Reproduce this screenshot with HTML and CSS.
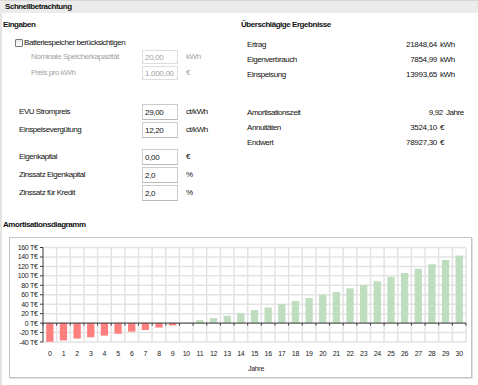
FILE: index.html
```html
<!DOCTYPE html>
<html lang="de">
<head>
    <meta charset="UTF-8">
    <meta name="viewport" content="width=device-width, initial-scale=1.0">
    <title>Schnellbetrachtung</title>
    <link rel="stylesheet" href="styles.css">
</head>
<body>
    <div class="titlebar">Schnellbetrachtung</div>

    <div class="content">
        <div class="top">
            <section class="inputs">
                <h2>Eingaben</h2>

                <div class="group group-battery">
                    <label class="check-row">
                        <input type="checkbox" class="check">
                        <span>Batteriespeicher berücksichtigen</span>
                    </label>
                    <div class="field sub disabled">
                        <span class="field-label">Nominale Speicherkapazität</span>
                        <input type="text" class="num-input" value="20,00" disabled>
                        <span class="unit">kWh</span>
                    </div>
                    <div class="field sub disabled">
                        <span class="field-label">Preis pro kWh</span>
                        <input type="text" class="num-input" value="1.000,00" disabled>
                        <span class="unit">€</span>
                    </div>
                </div>

                <div class="group group-price">
                    <div class="field">
                        <span class="field-label">EVU Strompreis</span>
                        <input type="text" class="num-input" value="29,00">
                        <span class="unit">ct/kWh</span>
                    </div>
                    <div class="field">
                        <span class="field-label">Einspeisevergütung</span>
                        <input type="text" class="num-input" value="12,20">
                        <span class="unit">ct/kWh</span>
                    </div>
                </div>

                <div class="group group-money">
                    <div class="field">
                        <span class="field-label">Eigenkapital</span>
                        <input type="text" class="num-input" value="0,00">
                        <span class="unit">€</span>
                    </div>
                    <div class="field">
                        <span class="field-label">Zinssatz Eigenkapital</span>
                        <input type="text" class="num-input" value="2,0">
                        <span class="unit">%</span>
                    </div>
                    <div class="field">
                        <span class="field-label">Zinssatz für Kredit</span>
                        <input type="text" class="num-input" value="2,0">
                        <span class="unit">%</span>
                    </div>
                </div>
            </section>

            <section class="results">
                <h2>Überschlägige Ergebnisse</h2>

                <div class="group group-energy">
                    <div class="result-row">
                        <span>Ertrag</span><span class="value">21848,64</span><span>kWh</span>
                    </div>
                    <div class="result-row">
                        <span>Eigenverbrauch</span><span class="value">7854,99</span><span>kWh</span>
                    </div>
                    <div class="result-row">
                        <span>Einspeisung</span><span class="value">13993,65</span><span>kWh</span>
                    </div>
                </div>

                <div class="group group-finance">
                    <div class="result-row wide">
                        <span>Amortisationszeit</span><span class="value">9,92</span><span>Jahre</span>
                    </div>
                    <div class="result-row">
                        <span>Annuitäten</span><span class="value">3524,10</span><span>€</span>
                    </div>
                    <div class="result-row">
                        <span>Endwert</span><span class="value">78927,30</span><span>€</span>
                    </div>
                </div>
            </section>
        </div>

        <section class="chart-section">
            <h2>Amortisationsdiagramm</h2>
            <div class="chart-frame">
                <svg id="chart" width="461" height="139" viewBox="10 238 461 139"></svg>
            </div>
        </section>
    </div>

    <script>
        const data = [-39.5, -36.6, -32.7, -30, -26.6, -22.5, -18, -14.5, -9.5, -5, 0.4,
            6.4, 10.6, 15.5, 21, 27.6, 33, 40, 46.6, 53, 60, 66, 73.6, 81, 88.5,
            97.7, 106, 115, 124.6, 133.8, 143];

        const NS = 'http://www.w3.org/2000/svg';
        const chart = document.getElementById('chart');
        const left = 43, right = 466, zero = 323.1, scale = 0.4725;
        const cw = (right - left) / data.length;
        const y = v => zero - v * scale;

        function add(tag, attrs, text) {
            const el = document.createElementNS(NS, tag);
            for (const k in attrs) el.setAttribute(k, attrs[k]);
            if (text !== undefined) el.textContent = text;
            chart.appendChild(el);
            return el;
        }

        // grid
        for (let v = -40; v <= 160; v += 20) {
            add('line', { x1: left, x2: right, y1: y(v), y2: y(v), class: 'grid' });
        }
        for (let k = 1; k <= data.length; k++) {
            const x = left + cw * k;
            add('line', { x1: x, x2: x, y1: y(160), y2: y(-40), class: 'grid' });
        }

        // bars
        data.forEach((v, i) => {
            const cx = left + cw * (i + 0.5);
            const top = v >= 0 ? y(v) : zero;
            add('rect', {
                x: cx - 3.65, y: top, width: 7.3, height: Math.abs(v) * scale,
                class: v >= 0 ? 'bar-pos' : 'bar-neg'
            });
            add('text', { x: cx, y: 356, class: 'tick-label', 'text-anchor': 'middle' }, i);
        });

        // axes
        add('line', { x1: left, x2: left, y1: y(160), y2: y(-40), class: 'axis' });
        add('line', { x1: left, x2: right, y1: zero, y2: zero, class: 'axis' });
        for (let k = 0; k <= data.length; k++) {
            const x = left + cw * k;
            add('line', { x1: x, x2: x, y1: zero, y2: zero + 2.5, class: 'axis' });
        }
        for (let v = -40; v <= 160; v += 20) {
            add('line', { x1: left - 3, x2: left, y1: y(v), y2: y(v), class: 'axis' });
            add('text', { x: 37.5, y: y(v) + 2.5, class: 'tick-label', 'text-anchor': 'end' }, v + ' T€');
        }

        add('text', { x: 256, y: 371, class: 'tick-label', 'text-anchor': 'middle' }, 'Jahre');
    </script>
</body>
</html>
```

FILE: styles.css
```css
* {
    margin: 0;
    padding: 0;
    box-sizing: border-box;
}

body {
    width: 478px;
    height: 385px;
    overflow: hidden;
    background: #ffffff;
    color: #111111;
    font-family: "Liberation Sans", Arial, sans-serif;
    font-size: 8px;
    letter-spacing: -0.45px;
    line-height: 12px;
    white-space: nowrap;
}

.titlebar {
    height: 13px;
    padding-left: 5px;
    background: #ececec;
    border-top: 1px solid #d8d8d8;
    font-weight: bold;
    line-height: 12px;
}

.content {
    height: 372px;
    border-left: 2px solid #e4e4e4;
}

h2 {
    font-size: 8px;
    font-weight: bold;
    line-height: 12px;
    margin-top: 6px;
}

.top {
    display: flex;
    height: 189px;
}

/* Eingaben */

.inputs {
    width: 236px;
}

.inputs h2 {
    padding-left: 1px;
}

.group-battery {
    margin-top: 6px;
}

.group-price {
    margin-top: 22px;
}

.group-money {
    margin-top: 9px;
}

.check-row {
    display: flex;
    align-items: center;
    height: 12px;
    padding-left: 13px;
}

.check {
    appearance: none;
    -webkit-appearance: none;
    width: 8px;
    height: 8px;
    margin-right: 1px;
    border: 1px solid #7a7a7a;
    border-radius: 1px;
    background: linear-gradient(#e8e8e8, #ffffff);
}

.field {
    display: grid;
    grid-template-columns: 132px 36px auto;
    column-gap: 8px;
    align-items: center;
    height: 18px;
}

.field-label {
    padding-left: 17px;
}

.field.sub {
    height: 16px;
}

.field.sub .field-label {
    padding-left: 29px;
}

.num-input {
    width: 36px;
    height: 16px;
    padding-left: 2px;
    border: 1px solid #cccccc;
    border-bottom-color: #b9b9b9;
    background: #ffffff;
    color: #111111;
    font: inherit;
    letter-spacing: -0.3px;
    outline: none;
}

.field.sub .num-input {
    height: 14px;
}

.field.disabled {
    color: #a3a3a3;
}

.field.disabled .num-input {
    color: #a3a3a3;
    border-color: #dddddd;
}

/* Ergebnisse */

.results {
    flex: 1;
    padding-left: 2px;
}

.results h2 {
    padding-left: 1px;
}

.group-energy {
    margin-top: 6px;
}

.group-finance {
    margin-top: 23px;
}

.result-row {
    display: grid;
    grid-template-columns: 138px 49px auto;
    column-gap: 3px;
    align-items: center;
    height: 15px;
    padding-left: 7px;
}

.result-row.wide {
    grid-template-columns: 144px 49px auto;
}

.result-row .value {
    text-align: right;
    letter-spacing: -0.3px;
}

/* Diagramm */

.chart-section h2 {
    margin-top: 17px;
    padding-left: 1px;
}

.chart-frame {
    width: 463px;
    height: 141px;
    margin-top: 6px;
    margin-left: 7px;
    border: 1px solid #c4c4c4;
    box-shadow: 1px 1px 0 #e2e2e2;
    background: #ffffff;
}

#chart {
    display: block;
}

.grid {
    stroke: #e3e3e3;
    stroke-width: 1.5;
}

.axis {
    stroke: #3c3c3c;
    stroke-width: 1;
}

.bar-neg {
    fill: #ff7f7f;
}

.bar-pos {
    fill: #bfdebf;
}

.tick-label {
    font-family: "Liberation Sans", Arial, sans-serif;
    font-size: 7px;
    letter-spacing: -0.3px;
    fill: #222222;
}
```
